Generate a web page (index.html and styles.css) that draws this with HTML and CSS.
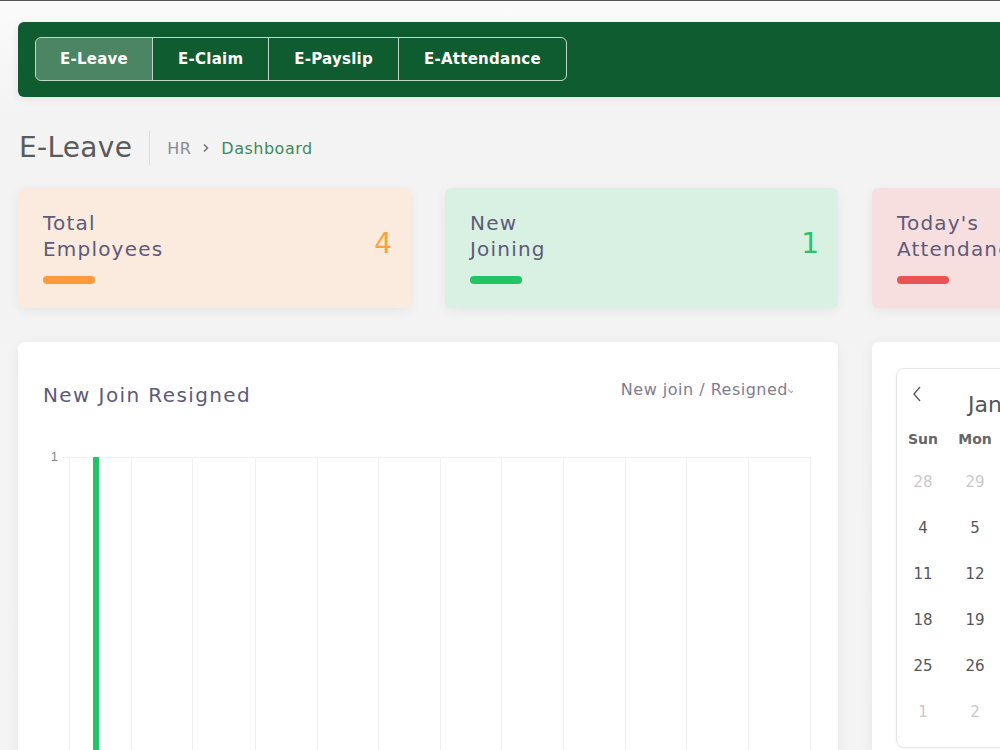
FILE: index.html
```html
<!DOCTYPE html>
<html lang="en">
  <head>
    <meta charset="UTF-8" />
    <meta name="viewport" content="width=device-width, initial-scale=1.0" />
    <title>E-Leave Dashboard</title>
    <link rel="stylesheet" href="styles.css">
  </head>
  <body>
    <div class="page">
      <div class="topbar">
        <div class="tabs">
          <a class="tab active">E-Leave</a>
          <a class="tab">E-Claim</a>
          <a class="tab">E-Payslip</a>
          <a class="tab">E-Attendance</a>
        </div>
      </div>

      <div class="page-head">
        <h1>E-Leave</h1>
        <div class="crumbs">
          <span class="crumb-muted">HR</span>
          <svg class="crumb-sep" width="8" height="10" viewBox="0 0 8 10"><path d="M2 1.5 L5.5 5 L2 8.5" fill="none" stroke="#777" stroke-width="1.6" /></svg>
          <span class="crumb-active">Dashboard</span>
        </div>
      </div>

      <div class="stats">
        <div class="stat stat-orange">
          <div class="stat-row">
            <div class="stat-title">Total<br />Employees</div>
            <div class="stat-num">4</div>
          </div>
          <div class="stat-bar"></div>
        </div>
        <div class="stat stat-green">
          <div class="stat-row">
            <div class="stat-title">New<br />Joining</div>
            <div class="stat-num">1</div>
          </div>
          <div class="stat-bar"></div>
        </div>
        <div class="stat stat-red">
          <div class="stat-row">
            <div class="stat-title">Today's<br />Attendance</div>
            <div class="stat-num">3</div>
          </div>
          <div class="stat-bar"></div>
        </div>
      </div>

      <div class="main">
        <div class="panel chart-panel">
          <div class="panel-head">
            <h2>New Join Resigned</h2>
            <div class="select">New join / Resigned<span class="chev"></span></div>
          </div>
          <svg class="chart" width="772" height="320" viewBox="0 0 772 320">
            <g stroke="#f0f0f0" stroke-width="1">
              <line x1="19" y1="17.5" x2="767" y2="17.5" />
              <line x1="26.5" y1="17" x2="26.5" y2="320" />
              <line x1="88.5" y1="17" x2="88.5" y2="320" />
              <line x1="149.5" y1="17" x2="149.5" y2="320" />
              <line x1="212.5" y1="17" x2="212.5" y2="320" />
              <line x1="274.5" y1="17" x2="274.5" y2="320" />
              <line x1="335.5" y1="17" x2="335.5" y2="320" />
              <line x1="397.5" y1="17" x2="397.5" y2="320" />
              <line x1="458.5" y1="17" x2="458.5" y2="320" />
              <line x1="520.5" y1="17" x2="520.5" y2="320" />
              <line x1="582.5" y1="17" x2="582.5" y2="320" />
              <line x1="643.5" y1="17" x2="643.5" y2="320" />
              <line x1="705.5" y1="17" x2="705.5" y2="320" />
              <line x1="767.5" y1="17" x2="767.5" y2="320" />
            </g>
            <text x="15" y="21" text-anchor="end" class="axis">1</text>
            <rect x="50" y="17" width="6" height="303" rx="1" fill="#22c466" />
          </svg>
        </div>

        <div class="panel cal-panel">
          <div class="calendar">
            <div class="cal-head">
              <svg class="cal-prev" width="12" height="18" viewBox="0 0 12 18"><path d="M9 2 L3 9 L9 16" fill="none" stroke="#555" stroke-width="1.3" /></svg>
              <span class="cal-month">January 2025</span>
            </div>
            <div class="cal-grid">
              <span class="dow">Sun</span><span class="dow">Mon</span><span class="dow">Tue</span><span class="dow">Wed</span><span class="dow">Thu</span><span class="dow">Fri</span><span class="dow">Sat</span>
              <span class="day off">28</span><span class="day off">29</span><span class="day off">30</span><span class="day off">31</span><span class="day">1</span><span class="day">2</span><span class="day">3</span>
              <span class="day">4</span><span class="day">5</span><span class="day">6</span><span class="day">7</span><span class="day">8</span><span class="day">9</span><span class="day">10</span>
              <span class="day">11</span><span class="day">12</span><span class="day">13</span><span class="day">14</span><span class="day">15</span><span class="day">16</span><span class="day">17</span>
              <span class="day">18</span><span class="day">19</span><span class="day">20</span><span class="day">21</span><span class="day">22</span><span class="day">23</span><span class="day">24</span>
              <span class="day">25</span><span class="day">26</span><span class="day">27</span><span class="day">28</span><span class="day">29</span><span class="day">30</span><span class="day">31</span>
              <span class="day off">1</span><span class="day off">2</span><span class="day off">3</span><span class="day off">4</span><span class="day off">5</span><span class="day off">6</span><span class="day off">7</span>
            </div>
          </div>
        </div>
      </div>
    </div>
  </body>
</html>
```

FILE: styles.css
```css
html,
body {
  margin: 0;
  overflow: hidden;
}
body {
  border-top: 1px solid #555;
  background: linear-gradient(#fbfbfb, #f3f3f3 120px, #f4f4f4);
  font-family: "DejaVu Sans", "Noto Sans", sans-serif;
  color: #5b5b5b;
}
.page {
  width: 1400px;
  padding: 21px 0 0 18px;
}
.topbar {
  height: 75px;
  box-sizing: border-box;
  padding: 15px 17px;
  background: #0f5c30;
  border-radius: 6px;
  box-shadow: 0 2px 10px rgba(0, 0, 0, 0.08);
}
.tabs {
  display: inline-flex;
  border: 1px solid rgba(255, 255, 255, 0.75);
  border-radius: 6px;
  overflow: hidden;
}
.tab {
  height: 42px;
  line-height: 42px;
  padding: 0 25px;
  color: #fff;
  font-size: 15px;
  font-weight: bold;
  letter-spacing: 0.25px;
  border-left: 1px solid rgba(255, 255, 255, 0.75);
}
.tab:first-child {
  border-left: none;
  padding: 0 24px;
}
.tab.active {
  background: rgba(255, 255, 255, 0.25);
}
.page-head {
  display: flex;
  align-items: center;
  height: 34px;
  margin: 34px 0 0 1px;
}
.page-head h1 {
  margin: 0;
  font-size: 28px;
  font-weight: normal;
  letter-spacing: 0.3px;
  color: #5a5a5a;
  padding-right: 17px;
  border-right: 1px solid #d9dee3;
  line-height: 34px;
}
.crumbs {
  padding-left: 17px;
  font-size: 16px;
  letter-spacing: 0.5px;
  display: flex;
  gap: 11px;
  align-items: center;
}
.crumb-muted {
  color: #8a8a95;
}
.crumb-active {
  color: #3d8a5c;
}
.stats {
  display: grid;
  grid-template-columns: 393px 393px 393px;
  gap: 34px;
  margin-top: 23px;
}
.stat {
  height: 120px;
  box-sizing: border-box;
  padding: 22px 18px 0 25px;
  border-radius: 6px;
  box-shadow: 0 3px 12px rgba(0, 0, 0, 0.06);
}
.stat-row {
  display: flex;
  justify-content: space-between;
  align-items: center;
}
.stat-title {
  font-size: 20px;
  line-height: 26px;
  letter-spacing: 1.2px;
  color: #5e5a78;
}
.stat-num {
  font-size: 28px;
  margin-top: 14px;
  margin-right: 1px;
}
.stat-bar {
  width: 52px;
  height: 8px;
  border-radius: 4px;
  margin-top: 14px;
}
.stat-orange {
  background: #fbebdf;
}
.stat-orange .stat-num {
  color: #fca13d;
}
.stat-orange .stat-bar {
  background: #fd9a3c;
}
.stat-green {
  background: #d9f1e3;
}
.stat-green .stat-num {
  color: #25c466;
}
.stat-green .stat-bar {
  background: #22c466;
}
.stat-red {
  background: #f8dfdf;
}
.stat-red .stat-num {
  color: #ea5455;
}
.stat-red .stat-bar {
  background: #ea5455;
}
.main {
  display: grid;
  grid-template-columns: 820px 420px;
  gap: 34px;
  margin-top: 34px;
}
.panel {
  background: #fff;
  border-radius: 6px;
  box-shadow: 0 3px 14px rgba(0, 0, 0, 0.06);
  height: 440px;
}
.chart-panel {
  padding: 38px 25px 0 25px;
}
.panel-head {
  display: flex;
  justify-content: space-between;
  align-items: flex-start;
}
.panel-head h2 {
  margin: 0;
  font-size: 20px;
  font-weight: normal;
  letter-spacing: 1.4px;
  color: #5e5a78;
  line-height: 30px;
}
.select {
  font-size: 16px;
  letter-spacing: 0.5px;
  color: #7f7d8e;
  margin: 0 20px 0 0;
  line-height: 20px;
}
.chev {
  display: inline-block;
  width: 4px;
  height: 2px;
  border-right: 1px solid #aaa;
  border-bottom: 1px solid #aaa;
  transform: rotate(45deg);
  margin-left: 0;
  vertical-align: 3px;
}
.chart {
  display: block;
  margin-top: 30px;
}
.axis {
  font-size: 13px;
  fill: #888;
  font-family: "Liberation Sans", sans-serif;
}
.cal-panel {
  padding: 26px 0 0 24px;
}
.calendar {
  border: 1px solid #e6e6e6;
  border-radius: 8px;
  height: 380px;
  box-sizing: border-box;
  box-shadow: 0 1px 4px rgba(0, 0, 0, 0.04);
}
.cal-head {
  display: flex;
  align-items: center;
  height: 54px;
  padding-left: 14px;
}
.cal-prev {
  margin-top: -4px;
}
.cal-month {
  font-size: 22px;
  color: #555;
  margin-left: 45px;
  margin-top: 16px;
}
.cal-grid {
  display: grid;
  grid-template-columns: repeat(7, 52px);
  grid-template-rows: 32px repeat(6, 46px);
  text-align: center;
}
.dow {
  font-size: 14px;
  font-weight: bold;
  color: #666;
  line-height: 32px;
}
.day {
  font-size: 15px;
  color: #555;
  line-height: 46px;
  padding-top: 4px;
}
.day.off {
  color: #c9c9c9;
}
```
